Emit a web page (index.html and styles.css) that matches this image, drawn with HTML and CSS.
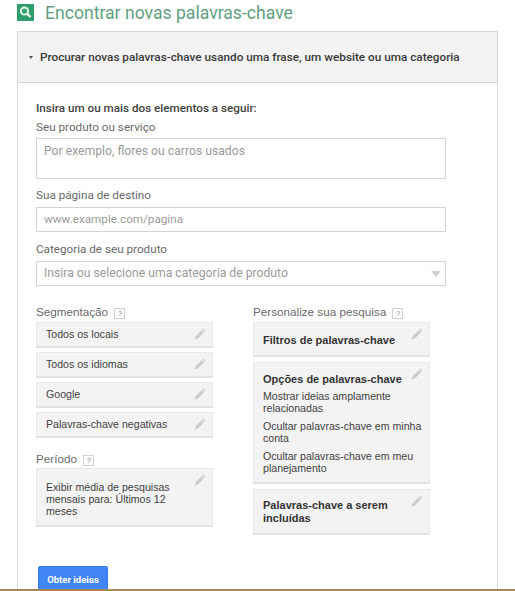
FILE: index.html
```html
<!DOCTYPE html>
<html lang="pt-BR">
<head>
    <meta charset="UTF-8">
    <meta name="viewport" content="width=device-width, initial-scale=1.0">
    <title>Encontrar novas palavras-chave</title>
    <link rel="stylesheet" href="styles.css">
</head>
<body>
    <div class="page">
        <div class="title-row">
            <svg class="title-icon" width="17" height="17" viewBox="0 0 17 17">
                <rect width="17" height="17" fill="#2e9e6b"/>
                <circle cx="7.5" cy="7" r="3.6" fill="#2e9e6b" stroke="#e8f6ef" stroke-width="2"/>
                <path d="M10 9.6l3.6 3.6" stroke="#e8f6ef" stroke-width="2.4"/>
            </svg>
            <h1>Encontrar novas palavras-chave</h1>
        </div>

        <div class="panel">
            <div class="panel-header">
                <span class="caret"></span>
                <span>Procurar novas palavras-chave usando uma frase, um website ou uma categoria</span>
            </div>
            <div class="panel-body">
                <div class="intro">Insira um ou mais dos elementos a seguir:</div>

                <div class="field-label label-first">Seu produto ou serviço</div>
                <div class="field field-area">Por exemplo, flores ou carros usados</div>

                <div class="field-label label-page">Sua página de destino</div>
                <div class="field field-line field-url">www.example.com/pagina</div>

                <div class="field-label label-category">Categoria de seu produto</div>
                <div class="field field-line field-select">
                    <span>Insira ou selecione uma categoria de produto</span>
                    <span class="select-arrow"></span>
                </div>

                <div class="columns">
                    <div class="column">
                        <div class="group-label">Segmentação <span class="help">?</span></div>
                        <div class="card-list">
                            <div class="card card-small">Todos os locais
                                <svg class="pencil" width="12" height="12" viewBox="0 0 12 12"><path d="M9.2.6l2.2 2.2-1 1-2.2-2.2zM7.6 2.2l2.2 2.2L3.8 10.4.6 11.4l1-3.2z" fill="#cbcbcb"/></svg>
                            </div>
                            <div class="card card-small">Todos os idiomas
                                <svg class="pencil" width="12" height="12" viewBox="0 0 12 12"><path d="M9.2.6l2.2 2.2-1 1-2.2-2.2zM7.6 2.2l2.2 2.2L3.8 10.4.6 11.4l1-3.2z" fill="#cbcbcb"/></svg>
                            </div>
                            <div class="card card-small">Google
                                <svg class="pencil" width="12" height="12" viewBox="0 0 12 12"><path d="M9.2.6l2.2 2.2-1 1-2.2-2.2zM7.6 2.2l2.2 2.2L3.8 10.4.6 11.4l1-3.2z" fill="#cbcbcb"/></svg>
                            </div>
                            <div class="card card-small">Palavras-chave negativas
                                <svg class="pencil" width="12" height="12" viewBox="0 0 12 12"><path d="M9.2.6l2.2 2.2-1 1-2.2-2.2zM7.6 2.2l2.2 2.2L3.8 10.4.6 11.4l1-3.2z" fill="#cbcbcb"/></svg>
                            </div>
                        </div>
                        <div class="group-label label-period">Período <span class="help">?</span></div>
                        <div class="card card-period">
                            Exibir média de pesquisas mensais para: Últimos 12 meses
                            <svg class="pencil" width="12" height="12" viewBox="0 0 12 12"><path d="M9.2.6l2.2 2.2-1 1-2.2-2.2zM7.6 2.2l2.2 2.2L3.8 10.4.6 11.4l1-3.2z" fill="#cbcbcb"/></svg>
                        </div>
                    </div>

                    <div class="column">
                        <div class="group-label">Personalize sua pesquisa <span class="help">?</span></div>
                        <div class="card-list card-list-wide">
                            <div class="card card-filter">
                                <strong>Filtros de palavras-chave</strong>
                                <svg class="pencil" width="12" height="12" viewBox="0 0 12 12"><path d="M9.2.6l2.2 2.2-1 1-2.2-2.2zM7.6 2.2l2.2 2.2L3.8 10.4.6 11.4l1-3.2z" fill="#cbcbcb"/></svg>
                            </div>
                            <div class="card card-options">
                                <strong>Opções de palavras-chave</strong>
                                <p class="first-option">Mostrar ideias amplamente relacionadas</p>
                                <p>Ocultar palavras-chave em minha conta</p>
                                <p>Ocultar palavras-chave em meu planejamento</p>
                                <svg class="pencil" width="12" height="12" viewBox="0 0 12 12"><path d="M9.2.6l2.2 2.2-1 1-2.2-2.2zM7.6 2.2l2.2 2.2L3.8 10.4.6 11.4l1-3.2z" fill="#cbcbcb"/></svg>
                            </div>
                            <div class="card card-include">
                                <strong>Palavras-chave a serem incluídas</strong>
                                <svg class="pencil" width="12" height="12" viewBox="0 0 12 12"><path d="M9.2.6l2.2 2.2-1 1-2.2-2.2zM7.6 2.2l2.2 2.2L3.8 10.4.6 11.4l1-3.2z" fill="#cbcbcb"/></svg>
                            </div>
                        </div>
                    </div>
                </div>

                <button class="submit">Obter ideias</button>
            </div>
        </div>
    </div>
    <div class="bottom-strip"></div>
</body>
</html>
```

FILE: styles.css
```css
* {
    margin: 0;
    padding: 0;
    box-sizing: border-box;
}

html, body {
    height: 100%;
    overflow: hidden;
    background: #fff;
}

body {
    font-family: Roboto, "Liberation Sans", sans-serif;
    color: #444;
}

.page {
    padding: 4px 17px 0;
}

.title-row {
    display: flex;
    align-items: center;
    height: 17px;
    gap: 11px;
    margin-bottom: 10px;
}

.title-icon {
    flex: none;
}

h1 {
    font-size: 17.6px;
    font-weight: 400;
    color: #5f9f82;
    line-height: 24px;
}

.panel {
    width: 481px;
    border: 1px solid #d6d6d6;
    border-bottom: none;
}

.panel-header {
    display: flex;
    align-items: center;
    height: 51px;
    padding-left: 11px;
    gap: 7px;
    background: #f3f3f3;
    border-bottom: 1px solid #d6d6d6;
    font-size: 11.75px;
    font-weight: 500;
    color: #3a3a3a;
}

.caret {
    width: 0;
    height: 0;
    border-left: 2.5px solid transparent;
    border-right: 2.5px solid transparent;
    border-top: 3px solid #555;
}

.panel-body {
    padding: 18px 18px 0;
}

.intro {
    font-size: 11.7px;
    font-weight: 500;
    line-height: 15px;
    color: #3f3f3f;
}

.field-label {
    font-size: 11.7px;
    line-height: 15px;
    color: #6a6a6a;
}

.label-first {
    margin-top: 4px;
    margin-bottom: 3px;
}

.label-page {
    margin-top: 9px;
    margin-bottom: 4px;
}

.label-category {
    margin-top: 10px;
    margin-bottom: 4px;
}

.field {
    width: 410px;
    border: 1px solid #d4d4d4;
    background: #fff;
    font-size: 12.2px;
    color: #9b9b9b;
    padding-left: 7px;
}

.field-area {
    height: 41px;
    padding-top: 5px;
    line-height: 15px;
}

.field-line {
    height: 25px;
    line-height: 23px;
}

.field-url {
    font-size: 11.7px;
}

.field-select {
    display: flex;
    justify-content: space-between;
    align-items: center;
    padding-right: 4px;
}

.select-arrow {
    width: 0;
    height: 0;
    border-left: 5px solid transparent;
    border-right: 5px solid transparent;
    border-top: 6px solid #d0d0d0;
}

.columns {
    display: flex;
    gap: 40px;
    margin-top: 18px;
}

.column {
    width: 177px;
}

.group-label {
    font-family: "Liberation Sans", sans-serif;
    font-size: 11.7px;
    line-height: 15px;
    color: #6a6a6a;
    margin-bottom: 3px;
}

.help {
    display: inline-block;
    width: 11px;
    height: 11px;
    margin-left: 3px;
    border: 1px solid #d0d0d0;
    font-size: 8px;
    line-height: 9px;
    text-align: center;
    color: #888;
    vertical-align: 0;
}

.card-list {
    display: flex;
    flex-direction: column;
    gap: 4px;
}

.card-list-wide {
    gap: 5px;
}

.card {
    position: relative;
    background: #f3f3f3;
    border: 1px solid #e8e8e8;
    border-bottom: 2px solid #e2e2e2;
    font-family: "Liberation Sans", sans-serif;
    font-size: 10.6px;
    line-height: 12px;
    color: #3f3f3f;
    padding-left: 9px;
    padding-right: 4px;
}

.card strong {
    font-size: 11px;
    font-weight: 700;
    display: block;
    color: #333;
}

.card p {
    margin-top: 6px;
}

.card .first-option {
    margin-top: 5px;
}

.pencil {
    position: absolute;
    top: 5px;
    right: 6px;
}

.card-small {
    height: 26px;
    line-height: 22px;
}

.label-period {
    margin-top: 13px;
    margin-bottom: 2px;
}

.card-period {
    height: 59px;
    padding-top: 12px;
    padding-right: 16px;
}

.card-filter {
    height: 35px;
    padding-top: 11px;
}

.card-options {
    height: 122px;
    padding-top: 10px;
}

.card-include {
    height: 46px;
    padding-top: 9px;
}

.card-include strong {
    line-height: 13px;
}

.submit {
    display: block;
    width: 70px;
    height: 26px;
    margin-top: 31px;
    margin-left: 2px;
    background: #4285f4;
    border: 1px solid #3b78e7;
    border-radius: 2px;
    color: #fff;
    font-family: inherit;
    font-size: 9.5px;
    font-weight: 700;
}

.bottom-strip {
    position: fixed;
    left: 0;
    right: 0;
    bottom: 0;
    height: 2px;
    background: #a9894f;
}
```
